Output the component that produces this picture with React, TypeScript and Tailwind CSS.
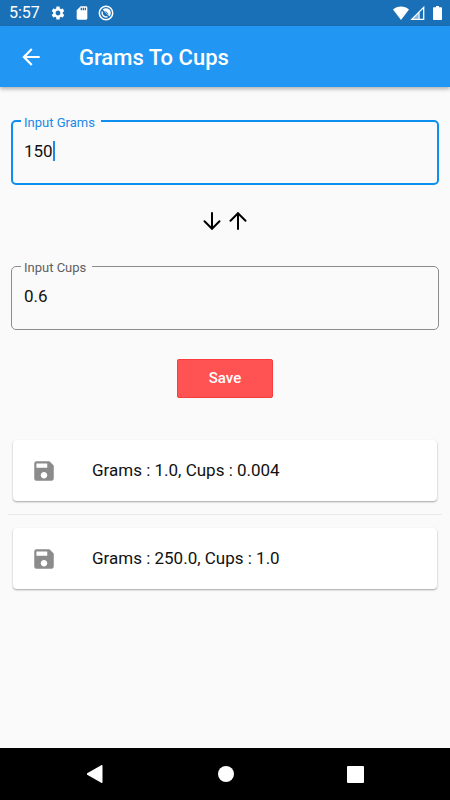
import { useState } from 'react';
import { MdArrowBack, MdSave, MdSdCard, MdSettings } from 'react-icons/md';

const GRAMS_PER_CUP = 250;

interface Conversion {
  id: number;
  grams: string;
  cups: string;
}

const savedConversions: Conversion[] = [
  { id: 1, grams: '1.0', cups: '0.004' },
  { id: 2, grams: '250.0', cups: '1.0' },
];

function StatusBar() {
  return (
    <div className="flex h-[26px] items-center justify-between bg-[#1a70b7] pl-[9px] pr-2 text-white">
      <div className="flex items-center gap-[10px]">
        <span className="text-base leading-none">5:57</span>
        <div className="flex items-center gap-2">
          <MdSettings className="size-4" />
          <MdSdCard className="size-4" />
          <svg viewBox="0 0 16 16" className="size-4" fill="none" stroke="currentColor">
            <circle cx="8" cy="8" r="6.7" strokeWidth="1.5" />
            <path d="M4.600 4.600a4.800 4.800 0 0 1 6.800 6.800z" fill="currentColor" stroke="none" />
            <path d="M4.300 6.500a4.100 4.100 0 0 0 5.200 5.200" strokeWidth="1.400" />
            <path d="M7.500 6.300l3 3" stroke="#1a70b7" strokeWidth="1" />
          </svg>
        </div>
      </div>
      <div className="flex items-center">
        <svg viewBox="0 0 16 14" className="h-[14px] w-4" fill="currentColor">
          <path d="M8 14 0 3.600C2.200 1.600 5 .5 8 .5s5.800 1.100 8 3.100z" />
        </svg>
        <svg viewBox="0 0 15 14" className="ml-px h-[14px] w-[15px]" fill="none" stroke="currentColor">
          <path d="M1.800 13.300H13.700V1.400z" strokeWidth="1.300" />
          <path d="M8.500 6.600v6.400H2.500z" fill="currentColor" fillOpacity="0.5" stroke="none" />
          <path d="M9 6.500v6.500" strokeWidth="1.300" />
        </svg>
        <svg viewBox="0 0 9 14" className="ml-2 h-[14px] w-[9px]" fill="currentColor">
          <path d="M3 0h3v1.300h2.200q.8 0 .8.800v11.100q0 .8-.8.800H.8q-.8 0-.8-.8V2.100q0-.8.8-.8H3z" />
        </svg>
      </div>
    </div>
  );
}

interface AmountFieldProps {
  id: string;
  label: string;
  value: string;
  active: boolean;
  onFocus: () => void;
  onChange: (value: string) => void;
}

function AmountField({ id, label, value, active, onFocus, onChange }: AmountFieldProps) {
  return (
    <fieldset
      className={
        active
          ? 'h-[74px] rounded-[5px] border-2 border-[#0d8ff0] px-2'
          : 'h-[74px] rounded-[5px] border border-[#8c8c8c] px-[9px]'
      }
    >
      <legend className="pl-[3px] pr-[6px] pt-1 text-[13px] leading-4">
        <label htmlFor={id} className={active ? 'text-[#2088e8]' : 'text-[#5f5f5f]'}>
          {label}
        </label>
      </legend>
      <div className="relative px-[3px] pt-2 text-[17px] leading-6 text-[#111111]">
        <input
          id={id}
          type="text"
          inputMode="decimal"
          value={value}
          onFocus={onFocus}
          onChange={(e) => onChange(e.target.value)}
          className="block w-full caret-transparent outline-none"
        />
        {active && (
          <div className="pointer-events-none absolute inset-x-[3px] top-2 flex items-center" aria-hidden="true">
            <span className="invisible">{value}</span>
            <span className="h-5 w-[2px] bg-[#2088e8]" />
          </div>
        )}
      </div>
    </fieldset>
  );
}

function ConversionCard({ grams, cups }: Conversion) {
  return (
    <div className="mx-[5px] flex h-[61px] items-center gap-[35px] rounded bg-white px-[18px] shadow-[0_1px_2px_rgba(0,0,0,0.35)]">
      <MdSave className="size-[26px] text-[#8b8b8b]" />
      <span className="text-[17px] text-[#111111]">
        Grams : {grams}, Cups : {cups}
      </span>
    </div>
  );
}

export default function App() {
  const [grams, setGrams] = useState('150');
  const [cups, setCups] = useState('0.6');
  const [active, setActive] = useState('grams');
  const [saved, setSaved] = useState(savedConversions);

  const handleGramsChange = (value: string) => {
    setGrams(value);
    setCups(String(Number(value) / GRAMS_PER_CUP || 0));
  };

  const handleCupsChange = (value: string) => {
    setCups(value);
    setGrams(String(Number(value) * GRAMS_PER_CUP || 0));
  };

  const handleSave = () => {
    setSaved([...saved, { id: saved.length + 1, grams, cups }]);
  };

  return (
    <div className="flex min-h-screen flex-col bg-[#fafafa] font-['Roboto',sans-serif]">
      <StatusBar />
      <header className="flex h-[61px] items-center gap-[35px] bg-[#2196f3] px-[18px] text-white shadow-[0_2px_4px_rgba(0,0,0,0.3)]">
        <button type="button" aria-label="Back">
          <MdArrowBack className="block size-[26px]" />
        </button>
        <h1 className="pt-[2px] text-[22px] font-medium">Grams To Cups</h1>
      </header>

      <main className="flex-1 px-[11px] pt-6 pb-6">
        <AmountField
          id="grams"
          label="Input Grams"
          value={grams}
          active={active === 'grams'}
          onFocus={() => setActive('grams')}
          onChange={handleGramsChange}
        />

        <div className="flex h-[71px] items-center justify-center gap-2">
          <svg viewBox="0 0 18 18" className="size-[18px]" fill="none" stroke="black" strokeWidth="2" strokeLinecap="round">
            <path d="M9 1v16M1.500 9.300 9 16.800l7.500-7.500" />
          </svg>
          <svg viewBox="0 0 18 18" className="size-[18px]" fill="none" stroke="black" strokeWidth="2" strokeLinecap="round">
            <path d="M9 17V1M1.500 8.700 9 1.200l7.500 7.500" />
          </svg>
        </div>

        <AmountField
          id="cups"
          label="Input Cups"
          value={cups}
          active={active === 'cups'}
          onFocus={() => setActive('cups')}
          onChange={handleCupsChange}
        />

        <div className="mt-[29px] flex justify-center">
          <button
            type="button"
            onClick={handleSave}
            className="h-[39px] w-24 rounded-[2px] border border-[#f93c3c] bg-[#ff5252] text-[15px] font-medium text-white"
          >
            Save
          </button>
        </div>

        <ul className="-mx-[3px] mt-[42px]">
          {saved.map((item, index) => (
            <li key={item.id}>
              {index > 0 && <hr className="my-[13px] border-[#e9e9e9]" />}
              <ConversionCard {...item} />
            </li>
          ))}
        </ul>
      </main>

      <nav className="flex h-[52px] items-center justify-around bg-black px-[30px] text-white">
        <button type="button" aria-label="Back">
          <svg viewBox="1 0 18 18" className="block size-[18px]" fill="currentColor">
            <path d="M1.200 8.200 15.200.3q1.300-.6 1.300.7v16q0 1.300-1.300.7L1.200 9.800q-1.100-.8 0-1.600z" />
          </svg>
        </button>
        <button type="button" aria-label="Home" className="size-4 rounded-full bg-white" />
        <button type="button" aria-label="Recent apps" className="size-[17px] rounded-[1px] bg-white" />
      </nav>
    </div>
  );
}
